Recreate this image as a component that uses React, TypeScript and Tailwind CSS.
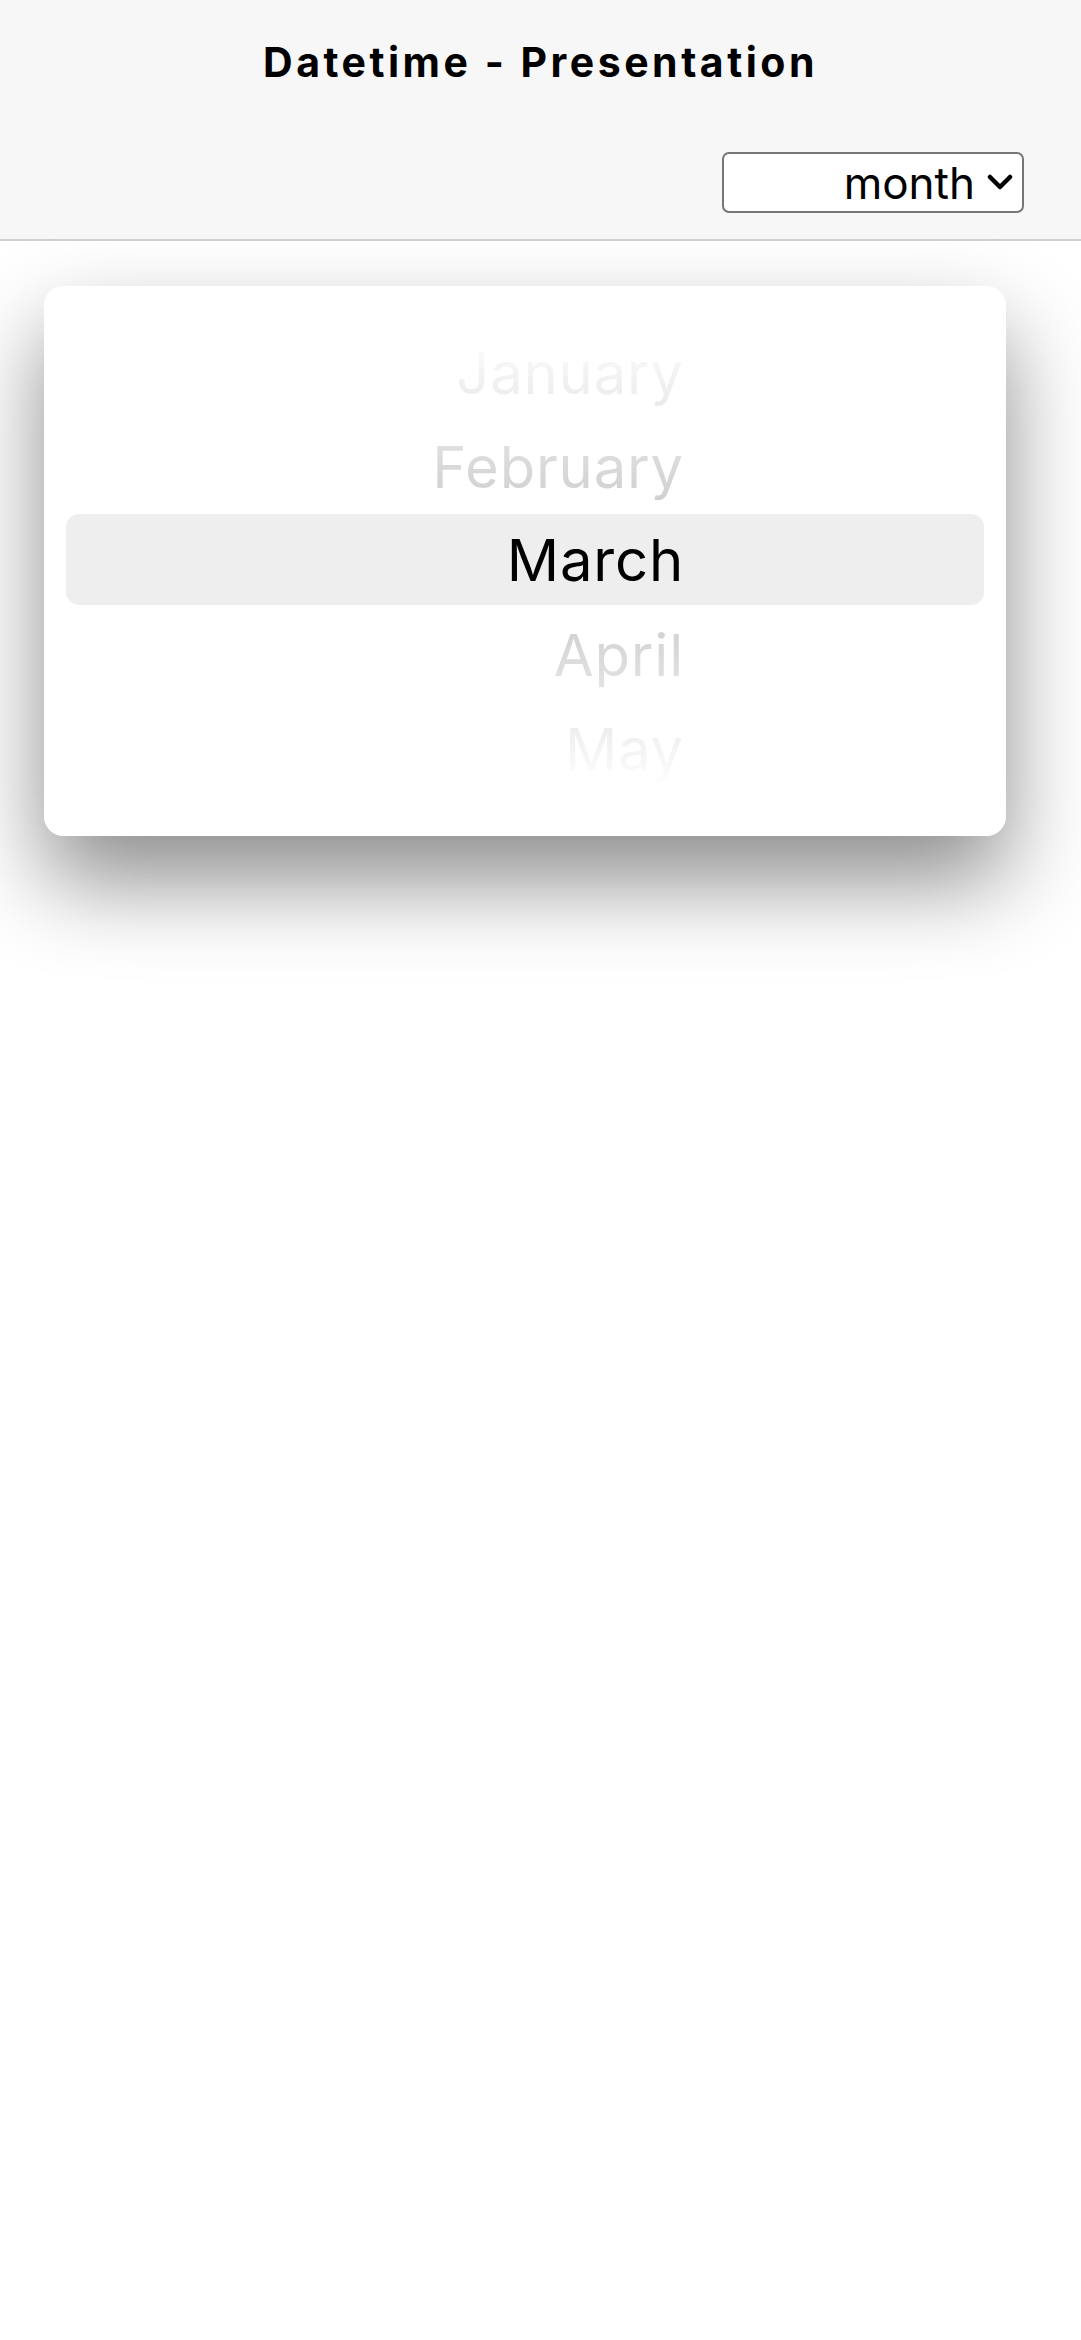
import React from "react";

const months = [
  { name: "January", active: false },
  { name: "February", active: false },
  { name: "March", active: true },
  { name: "April", active: false },
  { name: "May", active: false },
];

export default function App() {
  return (
    <div
      className="min-h-[2340px] w-full bg-white text-black"
      style={{ fontFamily: "Inter, 'Noto Sans', sans-serif" }}
    >
      <header className="flex flex-col bg-[#f7f7f7] border-b-[2px] border-[#d0d0d0]">
        <div className="flex h-[124px] items-center justify-center">
          <h1 className="text-[41px] font-bold leading-none tracking-[3.5px]">Datetime - Presentation</h1>
        </div>
        <div className="flex justify-end pt-[28px] pb-[26px] pr-[57px]">
          <div className="flex h-[61px] w-[302px] items-center justify-end rounded-[7px] border-[2px] border-[#767676] bg-white pr-[9px]">
            <span className="text-[44px] leading-none">month</span>
            <svg
              className="ml-[12px]"
              width="26"
              height="17"
              viewBox="0 0 26 17"
              fill="none"
              stroke="#000"
              strokeWidth="4.5"
              strokeLinecap="round"
              strokeLinejoin="round"
            >
              <path d="M3 3 L13 13 L23 3" />
            </svg>
          </div>
        </div>
      </header>

      <main className="px-[44px] pt-[45px]">
        <div className="relative h-[550px] w-[962px] overflow-hidden rounded-[20px] bg-white shadow-[0_45px_90px_rgba(0,0,0,0.45)]">
          <div className="flex flex-col py-[40px]">
            {months.map((m) =>
              m.active ? (
                <div key={m.name} className="h-[94px] px-[22px]">
                  <div className="flex h-[91px] items-center rounded-[13px] bg-[#eeeeee]">
                    <span className="block w-[618px] text-right text-[58px] leading-none tracking-[0.8px] text-black">
                      {m.name}
                    </span>
                  </div>
                </div>
              ) : (
                <div key={m.name} className="flex h-[94px] items-center">
                  <span className="block w-[640px] text-right text-[58px] leading-none tracking-[0.8px] text-black">
                    {m.name}
                  </span>
                </div>
              )
            )}
          </div>
          <div className="pointer-events-none absolute left-0 right-0 top-0 h-[228px] bg-[linear-gradient(to_bottom,#ffffff_20%,rgba(255,255,255,0.8)_100%)]" />
          <div className="pointer-events-none absolute bottom-0 left-0 right-0 h-[231px] bg-[linear-gradient(to_top,#ffffff_20%,rgba(255,255,255,0.8)_100%)]" />
        </div>
      </main>
    </div>
  );
}
